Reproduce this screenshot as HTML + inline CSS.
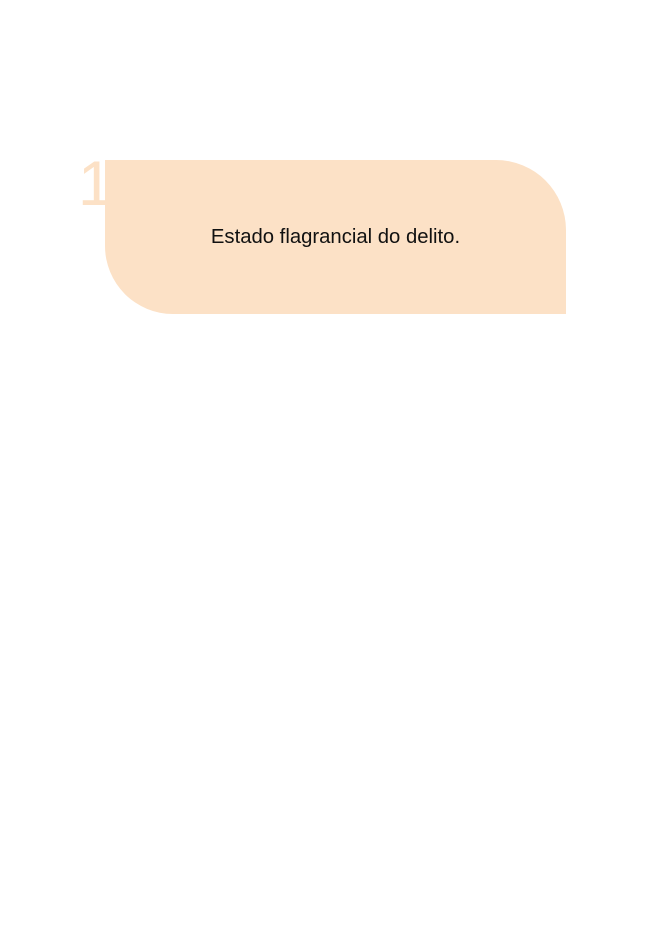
<!DOCTYPE html>
<html><head><style>
body{margin:0;width:650px;height:951px;background:#fff;position:relative;overflow:hidden;font-family:"Liberation Sans",sans-serif}
.box{position:absolute;left:105px;top:160px;width:461px;height:154px;background:#fce1c6;border-top-right-radius:70px;border-bottom-left-radius:68px}
.t{position:absolute;left:105px;width:461px;top:226px;text-align:center;font-size:20.3px;color:#111;box-sizing:border-box}
.n{position:absolute;left:78px;top:153px;font-size:63px;color:#fce1c6;line-height:1}
</style></head><body>
<div class="n">1</div>
<div class="box"></div>
<div class="t">Estado flagrancial do delito.</div>
</body></html>
